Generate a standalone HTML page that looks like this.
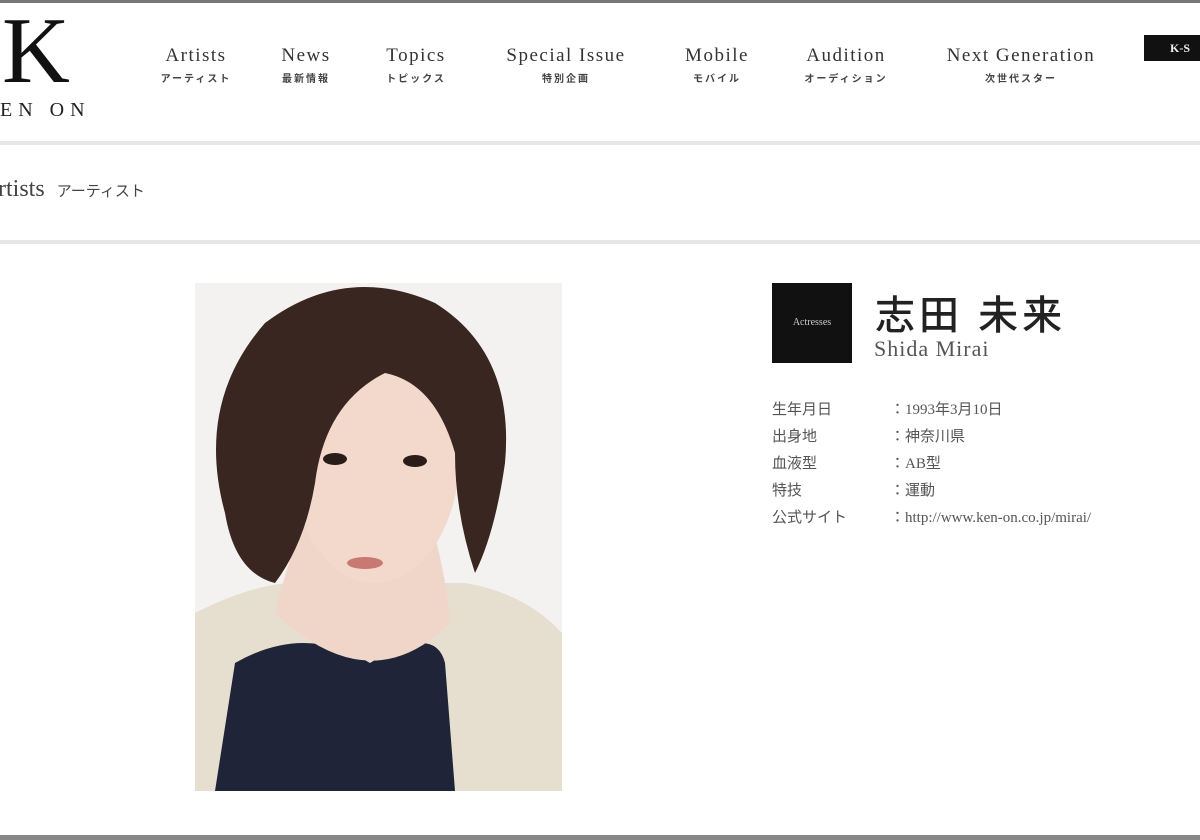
<!DOCTYPE html>
<html><head><meta charset="utf-8"><style>
*{margin:0;padding:0;box-sizing:border-box}
body{width:1200px;height:840px;overflow:hidden;background:#fff;position:relative;font-family:"Liberation Serif","Noto Serif CJK SC",serif;color:#222}
.a{position:absolute}
.nav{position:absolute;top:44px;text-align:center;transform:translateX(-50%);white-space:nowrap}
.nav .e{font-size:19px;letter-spacing:1.5px;color:#333;line-height:24px}
.nav .j{font-size:10px;font-weight:bold;color:#444;letter-spacing:2px;font-family:"Liberation Sans","Noto Sans CJK JP",sans-serif;margin-top:2px}
.row{position:absolute;left:772px;font-size:15px;color:#555;font-family:"Liberation Serif","Noto Sans CJK JP",serif}
.row span{position:absolute;left:118px;white-space:nowrap}
</style></head><body>
<div class="a" style="left:0;top:0;width:1200px;height:3px;background:#777"></div>
<div class="a" style="left:0;top:835px;width:1200px;height:5px;background:#888"></div>
<div class="a" style="left:2px;top:4px;font-size:94px;line-height:94px;color:#111">K</div>
<div class="a" style="left:0;top:99px;font-size:20px;letter-spacing:6px;color:#222">EN ON</div>
<div class="nav" style="left:196px"><div class="e">Artists</div><div class="j">アーティスト</div></div>
<div class="nav" style="left:306px"><div class="e">News</div><div class="j">最新情報</div></div>
<div class="nav" style="left:416px"><div class="e">Topics</div><div class="j">トピックス</div></div>
<div class="nav" style="left:566px"><div class="e">Special Issue</div><div class="j">特別企画</div></div>
<div class="nav" style="left:717px"><div class="e">Mobile</div><div class="j">モバイル</div></div>
<div class="nav" style="left:846px"><div class="e">Audition</div><div class="j">オーディション</div></div>
<div class="nav" style="left:1021px"><div class="e">Next Generation</div><div class="j">次世代スター</div></div>
<div class="a" style="left:1144px;top:35px;width:56px;height:26px;background:#111;color:#eee;font-size:12px;padding:6px 0 0 26px;font-weight:bold">K-S</div>
<div class="a" style="left:0;top:141px;width:1200px;height:4px;background:#e6e6e6"></div>
<div class="a" style="left:-2px;top:176px;font-size:24px;color:#444">rtists <span style="font-size:15px;font-family:'Liberation Sans','Noto Sans CJK JP',sans-serif;margin-left:6px">アーティスト</span></div>
<div class="a" style="left:0;top:240px;width:1200px;height:4px;background:#e6e6e6"></div>
<svg class="a" style="left:195px;top:283px" width="367" height="508" viewBox="0 0 367 508">
<rect width="367" height="508" fill="#f3f2f0"/>
<path d="M0 330 Q60 300 100 300 L270 300 Q330 310 367 350 L367 508 L0 508Z" fill="#e6dfcf"/>
<path d="M20 508 L40 380 Q110 340 175 380 Q240 340 250 380 L260 508Z" fill="#1f2438"/>
<path d="M80 330 Q100 250 120 220 L230 220 Q250 280 255 340 Q175 420 80 330Z" fill="#f0d6c8"/>
<ellipse cx="180" cy="170" rx="85" ry="130" fill="#f2d9cc"/>
<path d="M30 230 Q0 120 70 40 Q150 -20 240 20 Q320 70 310 180 Q300 250 280 290 Q260 230 260 170 Q240 100 190 90 Q130 120 120 200 Q110 260 80 300 Q40 290 30 230Z" fill="#3a2620"/>
<ellipse cx="140" cy="176" rx="12" ry="6" fill="#2a1c18"/><ellipse cx="220" cy="178" rx="12" ry="6" fill="#2a1c18"/>
<ellipse cx="170" cy="280" rx="18" ry="6" fill="#c87a72"/>
</svg>
<div class="a" style="left:772px;top:283px;width:80px;height:80px;background:#111;color:#ccc;font-size:10px;text-align:center;line-height:80px">Actresses</div>
<div class="a" style="left:875px;top:283px;font-size:40px;letter-spacing:4px;color:#222;font-weight:500;font-family:'Liberation Sans','Noto Sans CJK JP',sans-serif">志田 未来</div>
<div class="a" style="left:874px;top:336px;font-size:22px;color:#555;letter-spacing:1px">Shida Mirai</div>
<div class="row" style="top:398px">生年月日<span>：1993年3月10日</span></div>
<div class="row" style="top:425px">出身地<span>：神奈川県</span></div>
<div class="row" style="top:452px">血液型<span>：AB型</span></div>
<div class="row" style="top:479px">特技<span>：運動</span></div>
<div class="row" style="top:506px">公式サイト<span>：http://www.ken-on.co.jp/mirai/</span></div>
</body></html>
